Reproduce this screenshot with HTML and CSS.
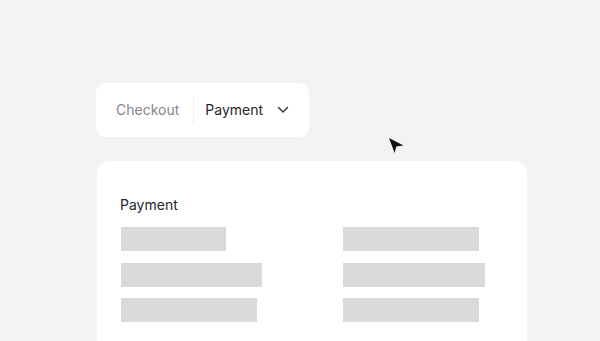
FILE: index.html
```html
<!DOCTYPE html>
<html>
<head>
<meta charset="utf-8">
<link rel="stylesheet" href="styles.css">
</head>
<body>
<div class="stage">
  <div class="crumbs">
    <span class="crumb muted">Checkout</span>
    <span class="divider"></span>
    <span class="crumb current">Payment</span>
    <svg class="chev" width="12" height="8" viewBox="0 0 12 8"><path d="M1.5 1.5 L6 6 L10.5 1.5" fill="none" stroke="#3a3d42" stroke-width="1.5" stroke-linecap="round" stroke-linejoin="round"/></svg>
  </div>
  <svg class="cursor" width="17" height="17" viewBox="0 0 17 17"><path d="M1 1 L15.5 8.5 L8.3 9.6 L6.6 16 Z" fill="#111"/></svg>
  <div class="card">
    <div class="title">Payment</div>
    <div class="grid">
      <div class="bar" style="width:105px"></div>
      <div class="bar" style="width:136px"></div>
      <div class="bar" style="width:141px"></div>
      <div class="bar" style="width:142px"></div>
      <div class="bar" style="width:136px"></div>
      <div class="bar" style="width:136px"></div>
    </div>
  </div>
</div>
</body>
</html>
```

FILE: styles.css
```css
html, body {
  margin: 0;
  padding: 0;
  background: #f3f3f1;
  font-family: Inter, "Liberation Sans", sans-serif;
  overflow: hidden;
}
.stage {
  position: relative;
  width: 600px;
  height: 341px;
  padding-top: 83px;
  box-sizing: border-box;
}
.crumbs {
  margin-left: 96px;
  display: inline-flex;
  align-items: center;
  height: 54px;
  background: #fff;
  border-radius: 10px;
  padding: 0 20px 0 20px;
  box-sizing: border-box;
}
.crumb {
  font-size: 14px;
  line-height: 20px;
}
.muted {
  color: #85878a;
  padding-right: 14px;
}
.current {
  color: #24272c;
  padding-left: 11px;
}
.divider {
  width: 1px;
  height: 28px;
  background: #efefef;
}
.chev {
  margin-left: 14px;
  display: block;
}
.cursor {
  position: absolute;
  left: 388px;
  top: 137px;
}
.card {
  margin: 24px 0 0 97px;
  width: 430px;
  height: 180px;
  background: #fff;
  border-radius: 12px 12px 0 0;
  padding: 34px 24px 0 24px;
  box-sizing: border-box;
}
.title {
  font-size: 14px;
  line-height: 20px;
  color: #24272c;
  margin-bottom: 12px;
  margin-left: -1px;
}
.grid {
  display: grid;
  grid-template-columns: 222px 1fr;
  row-gap: 11.5px;
}
.bar {
  height: 24px;
  background: #d9d9d9;
}
```
